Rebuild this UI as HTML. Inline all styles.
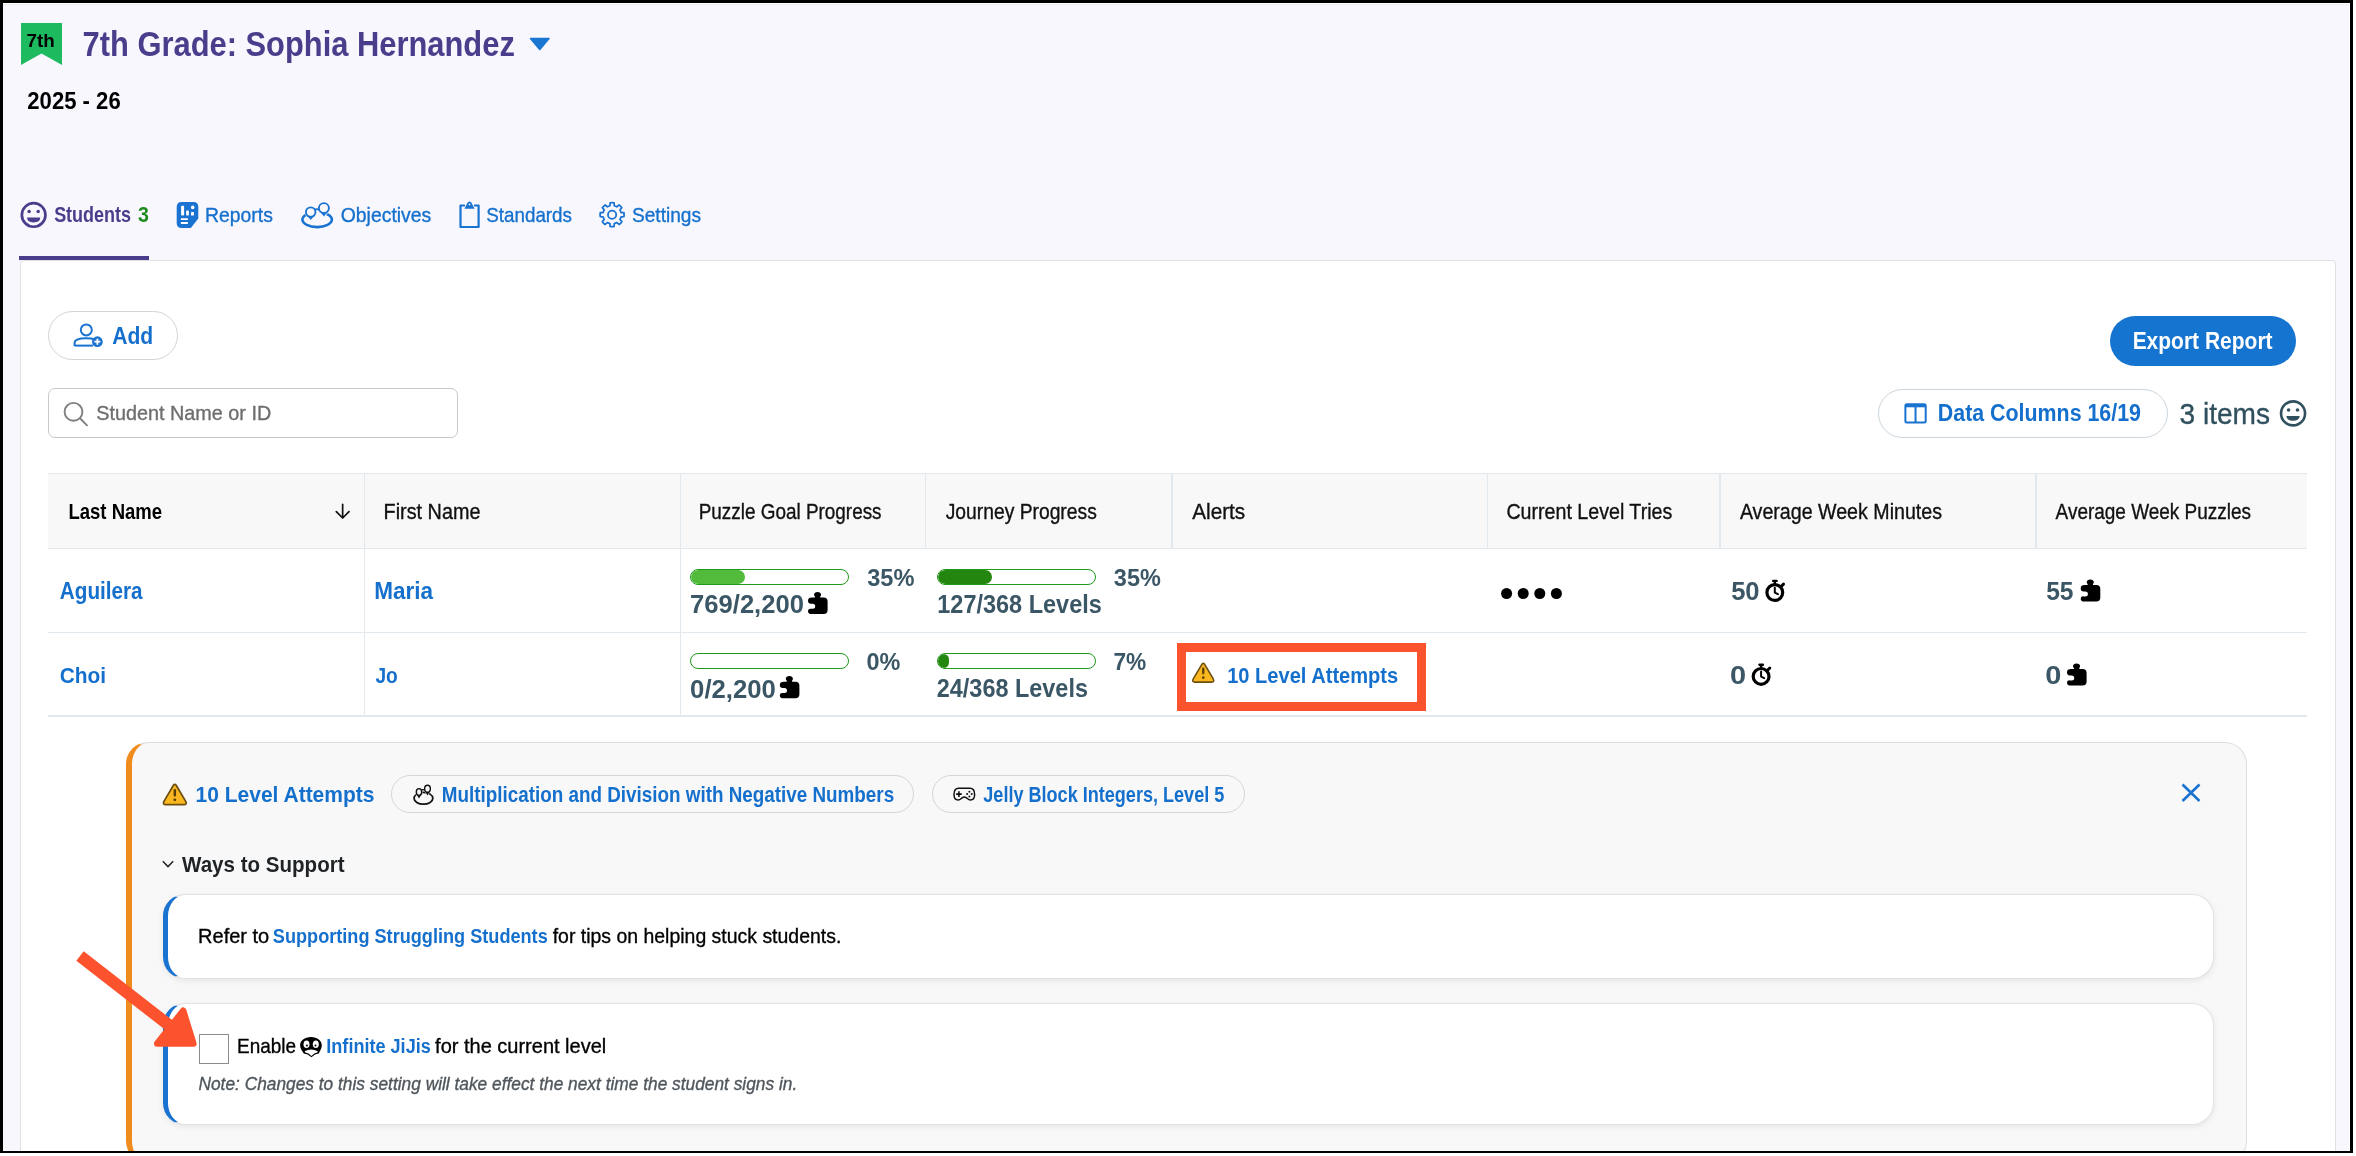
<!DOCTYPE html>
<html><head><meta charset="utf-8">
<style>
html,body{margin:0;padding:0;width:2356px;height:1156px;overflow:hidden;background:#fff;font-family:"Liberation Sans",sans-serif;}
.abs{position:absolute;box-sizing:border-box;}
svg{position:absolute;left:0;top:0;overflow:visible}
</style></head><body>
<!-- frame -->
<div class="abs" style="left:0;top:0;width:2353px;height:1153px;background:#000"></div>
<div id="pg" class="abs" style="left:0;top:0;width:2356px;height:1156px;clip-path:inset(3px 6px 5px 3px)">
<div class="abs" style="left:3px;top:3px;width:2347px;height:1148px;background:#f7f7fd"></div>
<div class="abs" style="left:3px;top:3px;width:2347px;height:1px;background:#fff"></div>
<div class="abs" style="left:3px;top:4px;width:2347px;height:2px;background:linear-gradient(#efeef3,#f7f6fc)"></div>
<div class="abs" style="left:2349px;top:3px;width:1px;height:1148px;background:#fff"></div>
<!-- main card -->
<div class="abs" style="left:20px;top:260px;width:2316px;height:1000px;background:#fff;border:1px solid #e0e0e3;border-radius:4px 4px 0 0"></div>
<!-- tab underline -->
<div class="abs" style="left:19px;top:256px;width:130px;height:4px;background:#4a3d8c"></div>
<!-- Add button -->
<div class="abs" style="left:48px;top:311px;width:130px;height:49px;border:1.5px solid #d4d4d4;border-radius:25px;background:#fff"></div>
<!-- Search -->
<div class="abs" style="left:48px;top:388px;width:410px;height:50px;border:1.5px solid #c8c8c8;border-radius:7px;background:#fff"></div>
<!-- Export -->
<div class="abs" style="left:2109.5px;top:316px;width:186.5px;height:49.7px;border-radius:25px;background:#1474cf"></div>
<!-- Data columns pill -->
<div class="abs" style="left:1877.5px;top:388.5px;width:290px;height:49px;border:1.5px solid #cbd5db;border-radius:25px;background:#fff"></div>
<!-- table header -->
<div class="abs" style="left:48px;top:473px;width:2259px;height:76px;background:#f8f8f8;border-top:1.5px solid #e1e9ef;border-bottom:1.5px solid #e1e9ef"></div>
<div class="abs" style="left:48px;top:631.5px;width:2259px;height:1.5px;background:#e1e9ef"></div>
<div class="abs" style="left:48px;top:715px;width:2259px;height:1.5px;background:#e1e9ef"></div>
<div class="abs" style="left:363.5px;top:473px;width:1.5px;height:243px;background:#e1e9ef"></div>
<div class="abs" style="left:679.5px;top:473px;width:1.5px;height:243px;background:#e1e9ef"></div>
<div class="abs" style="left:924.5px;top:473px;width:1.5px;height:76px;background:#e1e9ef"></div>
<div class="abs" style="left:1171px;top:473px;width:1.5px;height:76px;background:#e1e9ef"></div>
<div class="abs" style="left:1486.5px;top:473px;width:1.5px;height:76px;background:#e1e9ef"></div>
<div class="abs" style="left:1719px;top:473px;width:1.5px;height:76px;background:#e1e9ef"></div>
<div class="abs" style="left:2035px;top:473px;width:1.5px;height:76px;background:#e1e9ef"></div>
<!-- progress bars -->
<div class="abs" style="left:690.2px;top:568.7px;width:158.8px;height:16.4px;border:1.5px solid #1e9a1a;border-radius:9px;background:#fff;overflow:hidden"><div style="width:54.2px;height:100%;background:#52bb3c;border-radius:8px"></div></div>
<div class="abs" style="left:690.2px;top:652.7px;width:158.8px;height:16.4px;border:1.5px solid #1e9a1a;border-radius:9px;background:#fff"></div>
<div class="abs" style="left:936.6px;top:568.7px;width:159px;height:16.4px;border:1.5px solid #1e9a1a;border-radius:9px;background:#fff;overflow:hidden"><div style="width:54.3px;height:100%;background:#23860f;border-radius:8px"></div></div>
<div class="abs" style="left:936.6px;top:652.7px;width:159px;height:16.4px;border:1.5px solid #1e9a1a;border-radius:9px;background:#fff;overflow:hidden"><div style="width:11px;height:100%;background:#23860f;border-radius:8px"></div></div>
<!-- red highlight -->
<div class="abs" style="left:1177px;top:643px;width:249px;height:67.5px;border:9px solid #fc532f"></div>
<!-- alert panel -->
<div class="abs" style="left:126px;top:742px;width:2121px;height:421px;background:#f8f8f8;border:1px solid #dedede;border-left:6px solid #f08b1e;border-radius:22px"></div>
<!-- inner cards -->
<div class="abs" style="left:162.5px;top:893.7px;width:2051.5px;height:85px;background:#fff;border:1px solid #e2e2e2;border-left:5.5px solid #1a73d1;border-radius:22px;box-shadow:0 2px 6px rgba(0,0,0,0.08)"></div>
<div class="abs" style="left:162.5px;top:1002.8px;width:2051.5px;height:122.5px;background:#fff;border:1px solid #e2e2e2;border-left:5.5px solid #1a73d1;border-radius:22px;box-shadow:0 2px 6px rgba(0,0,0,0.08)"></div>
<!-- pills -->
<div class="abs" style="left:391.2px;top:775.1px;width:523.3px;height:37.8px;border:1.5px solid #d6d6d6;border-radius:19px"></div>
<div class="abs" style="left:932.3px;top:775.3px;width:313px;height:37.6px;border:1.5px solid #d6d6d6;border-radius:19px"></div>
<!-- checkbox -->
<div class="abs" style="left:199.4px;top:1034px;width:29.5px;height:29.6px;border:1.8px solid #8c8c8c;background:#fff"></div>

<svg width="2356" height="1156" viewBox="0 0 2356 1156" style="will-change:transform;font-family:'Liberation Sans',sans-serif">
<!-- ICONS -->
<!-- badge -->
<path d="M21 23 H62 V65 L41.5 53.6 L21 65 Z" fill="#1dba5f"/>
<!-- dropdown triangle -->
<path d="M530.5 38.5 H549 L539.75 49.5 Z" fill="#1976d2" stroke="#1976d2" stroke-width="1.6" stroke-linejoin="round"/>
<!-- students smiley -->
<g stroke="#4a3d8c" fill="none" stroke-width="2.7">
<circle cx="33.65" cy="214.95" r="11.8"/>
</g>
<circle cx="29.1" cy="211.6" r="1.75" fill="#4a3d8c"/>
<circle cx="38.2" cy="211.6" r="1.75" fill="#4a3d8c"/>
<path d="M27 217.6 H40.3 Q40 222.5 33.65 222.5 Q27.3 222.5 27 217.6 Z" fill="#4a3d8c"/>
<!-- reports icon -->
<path d="M181.7 202 H193.3 Q198.3 202 198.3 207 V218.6 L190.8 227.9 H181.7 Q176.7 227.9 176.7 222.9 V207 Q176.7 202 181.7 202 Z" fill="#1a73d1"/>
<g fill="#fff">
<rect x="181.1" y="205.8" width="3" height="9.8" rx="0.8"/>
<rect x="186.1" y="210.6" width="2.8" height="5" rx="0.8"/>
<circle cx="192.7" cy="207.4" r="1.8"/>
<rect x="191" y="212.1" width="2.9" height="3.5" rx="0.6"/>
<rect x="180.8" y="218.3" width="7.2" height="1.7" rx="0.6"/>
<rect x="180.8" y="222.1" width="7.2" height="1.8" rx="0.6"/>
</g>
<!-- objectives icon -->
<ellipse cx="317.15" cy="219.6" rx="14.75" ry="7.5" fill="none" stroke="#1a73d1" stroke-width="2.6"/>
<g stroke="#f7f7fd" stroke-width="0.6" fill="#f7f7fd">
<circle cx="310.7" cy="212.1" r="5.7"/><path d="M306.2 215.6 L310.7 220.8 L315.2 215.6 Z"/>
<circle cx="323.9" cy="208.1" r="5.9"/><path d="M319.3 211.7 L323.9 217.4 L328.5 211.7 Z"/>
</g>
<g fill="#1a73d1">
<path d="M306.9 215.3 L310.7 219.9 L314.5 215.3 Z"/>
<path d="M320 211.6 L323.9 216.4 L327.8 211.6 Z"/>
</g>
<rect x="314" y="210.6" width="7" height="3.6" fill="#f7f7fd"/>
<path d="M314.5 209.6 Q317 208.6 319.5 209.6" fill="none" stroke="#1a73d1" stroke-width="1.9"/>
<circle cx="310.7" cy="212.1" r="4.75" fill="#f7f7fd" stroke="#1a73d1" stroke-width="1.9"/>
<circle cx="323.9" cy="208.1" r="5" fill="#f7f7fd" stroke="#1a73d1" stroke-width="1.9"/>
<!-- standards clipboard -->
<g stroke="#1a73d1" stroke-width="2.2" fill="none" stroke-linejoin="round">
<path d="M465 205.5 H460.5 V227 H478.6 V205.5 H474"/>
</g>
<path d="M464.4 208.7 H474.6 L472.4 204.6 Q471.4 201.6 469.5 201.6 Q467.6 201.6 466.6 204.6 Z" fill="#1a73d1"/>
<circle cx="469.5" cy="204.4" r="0.9" fill="#f7f7fd"/>
<!-- settings gear -->
<g transform="translate(612.1 214.7)">
<path d="M-2.15 -8.95 L-1.98 -11.84 A12.0 12.0 0 0 1 1.98 -11.84 L2.15 -8.95 A9.2 9.2 0 0 1 4.81 -7.84 L6.97 -9.77 A12.0 12.0 0 0 1 9.77 -6.97 L7.84 -4.81 A9.2 9.2 0 0 1 8.95 -2.15 L11.84 -1.98 A12.0 12.0 0 0 1 11.84 1.98 L8.95 2.15 A9.2 9.2 0 0 1 7.84 4.81 L9.77 6.97 A12.0 12.0 0 0 1 6.97 9.77 L4.81 7.84 A9.2 9.2 0 0 1 2.15 8.95 L1.98 11.84 A12.0 12.0 0 0 1 -1.98 11.84 L-2.15 8.95 A9.2 9.2 0 0 1 -4.81 7.84 L-6.97 9.77 A12.0 12.0 0 0 1 -9.77 6.97 L-7.84 4.81 A9.2 9.2 0 0 1 -8.95 2.15 L-11.84 1.98 A12.0 12.0 0 0 1 -11.84 -1.98 L-8.95 -2.15 A9.2 9.2 0 0 1 -7.84 -4.81 L-9.77 -6.97 A12.0 12.0 0 0 1 -6.97 -9.77 L-4.81 -7.84 A9.2 9.2 0 0 1 -2.15 -8.95 Z" fill="none" stroke="#1a73d1" stroke-width="1.75" stroke-linejoin="round"/>
<circle r="4.1" fill="none" stroke="#1a73d1" stroke-width="1.8"/>
</g>
<!-- add person icon -->
<g stroke="#1a73d1" stroke-width="2" fill="none">
<circle cx="86.3" cy="329.9" r="5.5"/>
<path d="M74.6 346 V342.8 Q74.6 338.3 86 338.3 Q92 338.3 94.5 339.6"/>
<path d="M74.6 345.6 H93"/>
</g>
<circle cx="97.4" cy="341.7" r="5.4" fill="#1a73d1"/>
<path d="M97.4 338.7 V344.7 M94.4 341.7 H100.4" stroke="#fff" stroke-width="1.8"/>
<!-- search icon -->
<circle cx="73.5" cy="411.8" r="8.9" fill="none" stroke="#808080" stroke-width="1.9"/>
<path d="M80.2 418.5 L87 425.3" stroke="#808080" stroke-width="1.9" stroke-linecap="round"/>
<!-- data columns icon -->
<rect x="1905.4" y="404.3" width="20.3" height="18.1" rx="1.5" fill="none" stroke="#1a73d1" stroke-width="2"/>
<rect x="1905.4" y="404.3" width="20.3" height="3" fill="#1a73d1"/>
<path d="M1915.55 405 V422" stroke="#1a73d1" stroke-width="2"/>
<!-- 3 items smiley -->
<circle cx="2293.05" cy="413.4" r="12" fill="none" stroke="#30505e" stroke-width="2.6"/>
<circle cx="2288.6" cy="410" r="1.8" fill="#30505e"/>
<circle cx="2297.5" cy="410" r="1.8" fill="#30505e"/>
<path d="M2286.4 416 H2299.7 Q2299.4 420.8 2293.05 420.8 Q2286.7 420.8 2286.4 416 Z" fill="#30505e"/>
<!-- sort arrow -->
<path d="M342.65 504.3 V518 M336.3 511.6 L342.65 518 L349 511.6" fill="none" stroke="#111" stroke-width="1.7" stroke-linecap="round" stroke-linejoin="round"/>
<!-- dots -->
<g fill="#000"><circle cx="1506.6" cy="593.5" r="5.5"/><circle cx="1523.2" cy="593.5" r="5.5"/><circle cx="1539.8" cy="593.5" r="5.5"/><circle cx="1556.4" cy="593.5" r="5.5"/></g>
<!-- puzzle icons -->

<g transform="translate(808 591.9)"><path d="M4 5.6 H6.9 V4.4 Q5.9 3.9 6 2.6 Q6.3 0 9.55 0 Q12.8 0 13.1 2.6 Q13.2 3.9 12.3 4.4 V5.6 H15.6 Q19.6 5.6 19.6 9.6 V18.1 Q19.6 22.1 15.6 22.1 H3.6 Q0 22.1 0 19.3 Q0 16.6 3 16.9 H4.7 Q7.2 16.9 7.2 14.4 Q7.2 11.9 4.7 11.9 H3 Q0 11.9 0 8.9 Q0 5.6 4 5.6 Z"/></g>
<g transform="translate(779.8 676.1)"><path d="M4 5.6 H6.9 V4.4 Q5.9 3.9 6 2.6 Q6.3 0 9.55 0 Q12.8 0 13.1 2.6 Q13.2 3.9 12.3 4.4 V5.6 H15.6 Q19.6 5.6 19.6 9.6 V18.1 Q19.6 22.1 15.6 22.1 H3.6 Q0 22.1 0 19.3 Q0 16.6 3 16.9 H4.7 Q7.2 16.9 7.2 14.4 Q7.2 11.9 4.7 11.9 H3 Q0 11.9 0 8.9 Q0 5.6 4 5.6 Z"/></g>
<g transform="translate(2080.7 579.5)"><path d="M4 5.6 H6.9 V4.4 Q5.9 3.9 6 2.6 Q6.3 0 9.55 0 Q12.8 0 13.1 2.6 Q13.2 3.9 12.3 4.4 V5.6 H15.6 Q19.6 5.6 19.6 9.6 V18.1 Q19.6 22.1 15.6 22.1 H3.6 Q0 22.1 0 19.3 Q0 16.6 3 16.9 H4.7 Q7.2 16.9 7.2 14.4 Q7.2 11.9 4.7 11.9 H3 Q0 11.9 0 8.9 Q0 5.6 4 5.6 Z"/></g>
<g transform="translate(2067 663.5)"><path d="M4 5.6 H6.9 V4.4 Q5.9 3.9 6 2.6 Q6.3 0 9.55 0 Q12.8 0 13.1 2.6 Q13.2 3.9 12.3 4.4 V5.6 H15.6 Q19.6 5.6 19.6 9.6 V18.1 Q19.6 22.1 15.6 22.1 H3.6 Q0 22.1 0 19.3 Q0 16.6 3 16.9 H4.7 Q7.2 16.9 7.2 14.4 Q7.2 11.9 4.7 11.9 H3 Q0 11.9 0 8.9 Q0 5.6 4 5.6 Z"/></g>
<g transform="translate(1765.3 579.7)">
<circle cx="9.5" cy="12.8" r="7.9" fill="none" stroke="#000" stroke-width="3.2"/>
<rect x="6.7" y="0" width="5.8" height="2.4" rx="1.2" fill="#000"/>
<rect x="8.3" y="1" width="2.4" height="3.6" fill="#000"/>
<path d="M15.6 7 L18.2 4.4" stroke="#000" stroke-width="3" stroke-linecap="round"/>
<path d="M9.5 8 V13 L12.6 14.5" fill="none" stroke="#000" stroke-width="2" stroke-linecap="round" stroke-linejoin="round"/>
</g>
<g transform="translate(1751.6 663.6)">
<circle cx="9.5" cy="12.8" r="7.9" fill="none" stroke="#000" stroke-width="3.2"/>
<rect x="6.7" y="0" width="5.8" height="2.4" rx="1.2" fill="#000"/>
<rect x="8.3" y="1" width="2.4" height="3.6" fill="#000"/>
<path d="M15.6 7 L18.2 4.4" stroke="#000" stroke-width="3" stroke-linecap="round"/>
<path d="M9.5 8 V13 L12.6 14.5" fill="none" stroke="#000" stroke-width="2" stroke-linecap="round" stroke-linejoin="round"/>
</g>
<!-- warning icons -->

<g transform="translate(1191.8 661.9)">
<path d="M10.2 2.3 Q11.45 0.5 12.7 2.3 L21.6 17.3 Q22.8 20.2 19.9 20.2 H3 Q0.1 20.2 1.3 17.3 Z" fill="#fbb720" stroke="#6d5010" stroke-width="1.6" stroke-linejoin="round"/>
<rect x="10.3" y="5.6" width="2.3" height="7" rx="1.15" fill="#5a3f05"/>
<circle cx="11.45" cy="15.7" r="1.3" fill="#5a3f05"/>
</g>
<g transform="translate(162.4 782.8) scale(1.085)">
<path d="M10.2 2.3 Q11.45 0.5 12.7 2.3 L21.6 17.3 Q22.8 20.2 19.9 20.2 H3 Q0.1 20.2 1.3 17.3 Z" fill="#fbb720" stroke="#6d5010" stroke-width="1.6" stroke-linejoin="round"/>
<rect x="10.3" y="5.6" width="2.3" height="7" rx="1.15" fill="#5a3f05"/>
<circle cx="11.45" cy="15.7" r="1.3" fill="#5a3f05"/>
</g>
<!-- small objectives icon in pill (black) -->
<ellipse cx="423.45" cy="798.3" rx="9.4" ry="5.9" fill="none" stroke="#111" stroke-width="1.75"/>
<g fill="#f8f8f8">
<ellipse cx="419" cy="792" rx="3.6" ry="4.3"/><path d="M416 794.5 L419 799 L422 794.5 Z"/>
<ellipse cx="427.5" cy="788.8" rx="3.7" ry="4.4"/><path d="M424.4 791.3 L427.5 796.2 L430.6 791.3 Z"/>
</g>
<path d="M421.6 789.7 H425" stroke="#111" stroke-width="1.3"/>
<g fill="#111">
<path d="M416.3 794 L419 798.5 L421.7 794 Z"/>
<path d="M424.7 790.8 L427.5 795.6 L430.3 790.8 Z"/>
</g>
<ellipse cx="419" cy="792" rx="2.7" ry="3.4" fill="#f8f8f8" stroke="#111" stroke-width="1.4"/>
<ellipse cx="427.5" cy="788.8" rx="2.85" ry="3.5" fill="#f8f8f8" stroke="#111" stroke-width="1.4"/>
<!-- gamepad -->
<path d="M958.6 788.2 H970 C973.2 788.2 974.6 791.4 974.6 794.5 C974.6 798.2 972.7 800 970.4 800 C968.5 800 967.6 798.6 966.5 797.8 C965.4 797 963.2 797 962.1 797.8 C961 798.6 960.1 800 958.2 800 C955.9 800 954 798.2 954 794.5 C954 791.4 955.4 788.2 958.6 788.2 Z" fill="none" stroke="#111" stroke-width="1.5" stroke-linejoin="round"/>
<path d="M958.9 791.2 V797 M956.1 794.1 H961.8" stroke="#111" stroke-width="1.6"/>
<g fill="#111"><circle cx="969.4" cy="791.8" r="1"/><circle cx="969.4" cy="796.4" r="1"/><circle cx="967.1" cy="794.1" r="1"/><circle cx="971.7" cy="794.1" r="1"/></g>
<!-- close X -->
<path d="M2182.5 784.5 L2199.5 801 M2199.5 784.5 L2182.5 801" stroke="#1a73d1" stroke-width="2.6"/>
<!-- chevron -->
<path d="M162.8 861.2 L168 866.6 L173.2 861.2" fill="none" stroke="#222" stroke-width="1.45"/>
<!-- jiji -->
<path d="M311 1036.9 C317.5 1036.9 321.8 1040.5 321.8 1045.3 C321.8 1048.5 320 1050.5 318.8 1053.6 Q315 1053.8 311.4 1057.2 Q307.8 1053.8 303.8 1053.6 C302 1050.5 300.1 1048.5 300.1 1045.3 C300.1 1040.5 304.5 1036.9 311 1036.9 Z" fill="#000"/>
<ellipse cx="306.5" cy="1044.3" rx="3" ry="3.8" fill="#fff"/><ellipse cx="315.8" cy="1044.3" rx="3" ry="3.8" fill="#fff"/>
<circle cx="306.9" cy="1045.6" r="1" fill="#000"/><circle cx="315.5" cy="1045.6" r="1" fill="#000"/>
<path d="M304.6 1051.2 Q311 1047.6 317.8 1051.2 L317.3 1052.6 Q314.2 1052.9 311.4 1055.9 Q308.6 1052.9 305.4 1052.6 Z" fill="#fff"/>
<!-- orange arrow -->
<path d="M80 956 L172 1027.5" stroke="#fc532e" stroke-width="12"/>
<path d="M157.2 1043.6 L183.2 1010.8 L193.4 1043.6 Z" fill="#fc532e" stroke="#fc532e" stroke-width="6.5" stroke-linejoin="round"/>

<text x="26.55" y="46.70" font-size="18.60" font-weight="bold" fill="#000" textLength="28.20" lengthAdjust="spacingAndGlyphs">7th</text>
<text x="82.57" y="55.90" font-size="35.61" font-weight="bold" fill="#4a3d8c" textLength="432.26" lengthAdjust="spacingAndGlyphs">7th Grade: Sophia Hernandez</text>
<text x="27.34" y="109.30" font-size="23.69" font-weight="bold" fill="#000" textLength="93.36" lengthAdjust="spacingAndGlyphs">2025 - 26</text>
<text x="54.14" y="222.30" font-size="21.22" font-weight="bold" fill="#4a3d8c" textLength="76.91" lengthAdjust="spacingAndGlyphs">Students</text>
<text x="138.11" y="222.30" font-size="21.22" font-weight="bold" fill="#1f8a1f" textLength="10.90" lengthAdjust="spacingAndGlyphs">3</text>
<text x="205.05" y="222.30" font-size="20.78" font-weight="normal" fill="#1570cd" stroke="#1570cd" stroke-width="0.35" textLength="67.83" lengthAdjust="spacingAndGlyphs">Reports</text>
<text x="340.72" y="222.30" font-size="20.78" font-weight="normal" fill="#1570cd" stroke="#1570cd" stroke-width="0.35" textLength="90.56" lengthAdjust="spacingAndGlyphs">Objectives</text>
<text x="486.25" y="222.30" font-size="20.78" font-weight="normal" fill="#1570cd" stroke="#1570cd" stroke-width="0.35" textLength="85.72" lengthAdjust="spacingAndGlyphs">Standards</text>
<text x="631.93" y="222.30" font-size="20.78" font-weight="normal" fill="#1570cd" stroke="#1570cd" stroke-width="0.35" textLength="69.14" lengthAdjust="spacingAndGlyphs">Settings</text>
<text x="112.18" y="343.90" font-size="23.84" font-weight="bold" fill="#1570cd" textLength="41.01" lengthAdjust="spacingAndGlyphs">Add</text>
<text x="96.21" y="419.90" font-size="20.64" font-weight="normal" fill="#6e6e6e" stroke="#6e6e6e" stroke-width="0.35" textLength="175.03" lengthAdjust="spacingAndGlyphs">Student Name or ID</text>
<text x="2132.64" y="349.20" font-size="23.55" font-weight="bold" fill="#fff" textLength="139.92" lengthAdjust="spacingAndGlyphs">Export Report</text>
<text x="1937.82" y="421.10" font-size="23.11" font-weight="bold" fill="#1570cd" textLength="203.16" lengthAdjust="spacingAndGlyphs">Data Columns 16/19</text>
<text x="2179.56" y="423.90" font-size="29.80" font-weight="normal" fill="#30505e" stroke="#30505e" stroke-width="0.35" textLength="90.48" lengthAdjust="spacingAndGlyphs">3 items</text>
<text x="68.39" y="518.60" font-size="21.51" font-weight="bold" fill="#000" textLength="93.80" lengthAdjust="spacingAndGlyphs">Last Name</text>
<text x="383.62" y="518.60" font-size="21.51" font-weight="normal" fill="#111" stroke="#111" stroke-width="0.35" textLength="96.80" lengthAdjust="spacingAndGlyphs">First Name</text>
<text x="698.69" y="518.60" font-size="21.51" font-weight="normal" fill="#111" stroke="#111" stroke-width="0.35" textLength="182.88" lengthAdjust="spacingAndGlyphs">Puzzle Goal Progress</text>
<text x="945.71" y="518.60" font-size="21.51" font-weight="normal" fill="#111" stroke="#111" stroke-width="0.35" textLength="151.07" lengthAdjust="spacingAndGlyphs">Journey Progress</text>
<text x="1192.20" y="518.60" font-size="21.51" font-weight="normal" fill="#111" stroke="#111" stroke-width="0.35" textLength="53.02" lengthAdjust="spacingAndGlyphs">Alerts</text>
<text x="1506.42" y="518.60" font-size="21.51" font-weight="normal" fill="#111" stroke="#111" stroke-width="0.35" textLength="165.87" lengthAdjust="spacingAndGlyphs">Current Level Tries</text>
<text x="1739.90" y="518.60" font-size="21.51" font-weight="normal" fill="#111" stroke="#111" stroke-width="0.35" textLength="202.09" lengthAdjust="spacingAndGlyphs">Average Week Minutes</text>
<text x="2055.60" y="518.60" font-size="21.51" font-weight="normal" fill="#111" stroke="#111" stroke-width="0.35" textLength="195.47" lengthAdjust="spacingAndGlyphs">Average Week Puzzles</text>
<text x="59.79" y="599.00" font-size="23.40" font-weight="bold" fill="#1570cd" textLength="82.83" lengthAdjust="spacingAndGlyphs">Aguilera</text>
<text x="374.25" y="599.00" font-size="23.40" font-weight="bold" fill="#1570cd" textLength="58.84" lengthAdjust="spacingAndGlyphs">Maria</text>
<text x="59.66" y="682.60" font-size="22.67" font-weight="bold" fill="#1570cd" textLength="46.45" lengthAdjust="spacingAndGlyphs">Choi</text>
<text x="375.41" y="682.60" font-size="22.67" font-weight="bold" fill="#1570cd" textLength="22.38" lengthAdjust="spacingAndGlyphs">Jo</text>
<text x="867.23" y="585.80" font-size="24.42" font-weight="bold" fill="#3b5766" textLength="47.22" lengthAdjust="spacingAndGlyphs">35%</text>
<text x="690.08" y="613.30" font-size="25.15" font-weight="bold" fill="#3b5766" textLength="113.85" lengthAdjust="spacingAndGlyphs">769/2,200</text>
<text x="866.40" y="669.60" font-size="24.42" font-weight="bold" fill="#3b5766" textLength="33.85" lengthAdjust="spacingAndGlyphs">0%</text>
<text x="690.13" y="697.50" font-size="25.15" font-weight="bold" fill="#3b5766" textLength="85.80" lengthAdjust="spacingAndGlyphs">0/2,200</text>
<text x="1113.83" y="585.80" font-size="24.42" font-weight="bold" fill="#3b5766" textLength="47.02" lengthAdjust="spacingAndGlyphs">35%</text>
<text x="937.29" y="613.30" font-size="25.15" font-weight="bold" fill="#3b5766" textLength="164.56" lengthAdjust="spacingAndGlyphs">127/368 Levels</text>
<text x="1113.39" y="669.60" font-size="24.42" font-weight="bold" fill="#3b5766" textLength="32.84" lengthAdjust="spacingAndGlyphs">7%</text>
<text x="936.80" y="696.90" font-size="25.15" font-weight="bold" fill="#3b5766" textLength="151.15" lengthAdjust="spacingAndGlyphs">24/368 Levels</text>
<text x="1227.20" y="682.90" font-size="22.53" font-weight="bold" fill="#1570cd" textLength="171.02" lengthAdjust="spacingAndGlyphs">10 Level Attempts</text>
<text x="1731.13" y="599.60" font-size="25.29" font-weight="bold" fill="#3b5766" textLength="28.49" lengthAdjust="spacingAndGlyphs">50</text>
<text x="2046.16" y="599.60" font-size="25.29" font-weight="bold" fill="#3b5766" textLength="27.38" lengthAdjust="spacingAndGlyphs">55</text>
<text x="1729.93" y="683.60" font-size="25.29" font-weight="bold" fill="#3b5766" textLength="16.12" lengthAdjust="spacingAndGlyphs">0</text>
<text x="2045.33" y="683.60" font-size="25.29" font-weight="bold" fill="#3b5766" textLength="16.12" lengthAdjust="spacingAndGlyphs">0</text>
<text x="195.55" y="802.20" font-size="22.38" font-weight="bold" fill="#1570cd" textLength="178.91" lengthAdjust="spacingAndGlyphs">10 Level Attempts</text>
<text x="441.87" y="802.00" font-size="21.80" font-weight="bold" fill="#1570cd" textLength="452.31" lengthAdjust="spacingAndGlyphs">Multiplication and Division with Negative Numbers</text>
<text x="983.32" y="801.80" font-size="21.51" font-weight="bold" fill="#1570cd" textLength="240.95" lengthAdjust="spacingAndGlyphs">Jelly Block Integers, Level 5</text>
<text x="182.00" y="872.40" font-size="22.67" font-weight="bold" fill="#1f2326" textLength="162.56" lengthAdjust="spacingAndGlyphs">Ways to Support</text>
<text x="198.10" y="943.30" font-size="20.64" font-weight="normal" fill="#000" stroke="#000" stroke-width="0.35" textLength="71.12" lengthAdjust="spacingAndGlyphs">Refer to</text>
<text x="272.84" y="943.30" font-size="20.64" font-weight="bold" fill="#1570cd" textLength="274.92" lengthAdjust="spacingAndGlyphs">Supporting Struggling Students</text>
<text x="552.71" y="943.30" font-size="20.64" font-weight="normal" fill="#000" stroke="#000" stroke-width="0.35" textLength="288.60" lengthAdjust="spacingAndGlyphs">for tips on helping stuck students.</text>
<text x="237.08" y="1052.60" font-size="20.93" font-weight="normal" fill="#000" stroke="#000" stroke-width="0.35" textLength="59.00" lengthAdjust="spacingAndGlyphs">Enable</text>
<text x="326.32" y="1052.60" font-size="20.93" font-weight="bold" fill="#1570cd" textLength="104.44" lengthAdjust="spacingAndGlyphs">Infinite JiJis</text>
<text x="435.10" y="1052.60" font-size="20.93" font-weight="normal" fill="#000" stroke="#000" stroke-width="0.35" textLength="171.14" lengthAdjust="spacingAndGlyphs">for the current level</text>
<text x="198.48" y="1089.70" font-size="18.75" font-weight="normal" font-style="italic" fill="#4f565c" stroke="#4f565c" stroke-width="0.35" textLength="598.76" lengthAdjust="spacingAndGlyphs">Note: Changes to this setting will take effect the next time the student signs in.</text>
</svg>
</div>
</body></html>
